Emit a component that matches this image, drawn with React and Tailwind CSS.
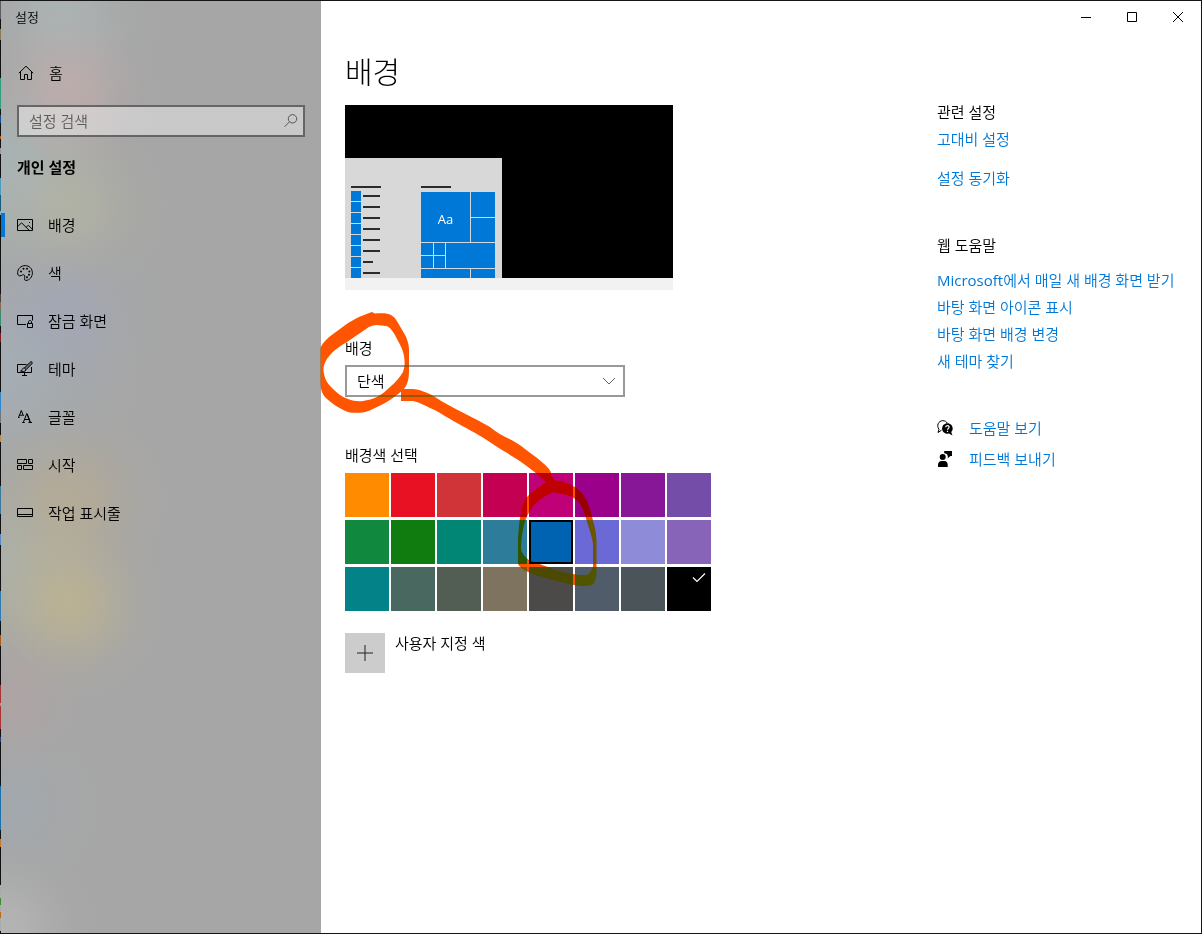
import { useState } from 'react'

const navItems = [
  { label: '배경', icon: PictureIcon, active: true },
  { label: '색', icon: PaletteIcon },
  { label: '잠금 화면', icon: LockScreenIcon },
  { label: '테마', icon: ThemeIcon },
  { label: '글꼴', icon: FontIcon },
  { label: '시작', icon: StartIcon },
  { label: '작업 표시줄', icon: TaskbarIcon },
]

const swatches = [
  '#ff8c00', '#e81123', '#d13438', '#c30052', '#bf0077', '#9a0089', '#881798', '#744da9',
  '#10893e', '#107c10', '#018574', '#2d7d9a', '#0063b1', '#6b69d6', '#8e8cd8', '#8764b8',
  '#038387', '#486860', '#525e54', '#7e735f', '#4c4a48', '#515c6b', '#4a5459', '#000000',
]

const webHelp = ['바탕 화면 아이콘 표시', '바탕 화면 배경 변경', '새 테마 찾기']

// [start, colour] of what shows along the window's left edge
const edgeStops = [
  [0, '#5a5a62'], [18, '#111111'], [28, '#8a7a50'], [39, '#111111'], [77, '#2f9e7c'], [108, '#111111'],
  [114, '#174a8a'], [122, '#111111'], [135, '#b05a10'], [138, '#111111'], [147, '#9a9a9a'], [153, '#111111'],
  [177, '#4a9cc0'], [194, '#1e5a80'], [210, '#7fb0c8'], [214, '#111111'], [293, '#444444'], [301, '#8a6a4a'],
  [309, '#3a8a70'], [325, '#111111'], [332, '#8a1a1a'], [341, '#111111'], [391, '#2f86c8'], [410, '#777777'],
  [422, '#111111'], [434, '#c08a40'], [441, '#111111'], [485, '#3a7a9a'], [513, '#111111'], [533, '#5a8ac8'],
  [544, '#111111'], [590, '#2f7ab0'], [620, '#111111'], [634, '#a85a18'], [645, '#111111'], [684, '#a83434'],
  [702, '#999999'], [705, '#a83434'], [728, '#111111'], [736, '#2a3a8a'], [741, '#111111'], [785, '#1a70a8'],
  [829, '#111111'], [838, '#c07a28'], [846, '#111111'], [884, '#aaaaaa'], [897, '#3a8a30'], [904, '#aaaaaa'],
  [911, '#c06a10'], [917, '#aaaaaa'], [930, '#111111'], [934, '#111111'],
]

const edgeGradient = edgeStops
  .slice(0, -1)
  .map(([y, color], i) => `${color} ${y}px ${edgeStops[i + 1][0]}px`)
  .join(', ')

// [x, y, radius, rgb, strength] of the desktop colours glowing through the acrylic
const glows = [
  [68, 602, 95, '200,185,135', 0.6],
  [68, 500, 100, '196,176,132', 0.45],
  [68, 90, 90, '212,178,176', 0.45],
  [70, 205, 95, '186,186,160', 0.5],
  [66, 310, 100, '158,166,194', 0.4],
  [60, 12, 100, '176,190,190', 0.5],
  [0, 170, 130, '170,188,190', 0.6],
  [0, 370, 140, '164,178,188', 0.6],
  [0, 560, 110, '174,182,170', 0.6],
  [10, 700, 85, '184,160,160', 0.4],
  [10, 805, 90, '156,170,180', 0.5],
  [0, 930, 95, '190,190,190', 0.6],
]

const acrylic = glows
  .map(
    ([x, y, r, rgb, a]) =>
      `radial-gradient(circle at ${x}px ${y}px, rgba(${rgb},${a}) 0, rgba(${rgb},${a * 0.8}) ${r * 0.25}px, rgba(${rgb},${a * 0.4}) ${r * 0.5}px, rgba(${rgb},${a * 0.1}) ${r * 0.78}px, rgba(${rgb},0) ${r}px)`,
  )
  .join(', ')

function Icon({ children, className = '' }) {
  return (
    <svg
      viewBox="0 0 16 16"
      fill="none"
      stroke="currentColor"
      aria-hidden="true"
      className={`size-4 shrink-0 ${className}`}
    >
      {children}
    </svg>
  )
}

function HomeIcon() {
  return (
    <Icon>
      <path d="M.8 8.200 8 1.200l7.200 7M2.500 6.800v7.700h4V9.500h3v5h4V6.800" />
    </Icon>
  )
}

function PictureIcon() {
  return (
    <Icon>
      <path d="M.5 2.500h15v11H.5z" />
      <path d="m.8 9.500 3.700-3.700 7.700 7.500M9.300 10.200l2-2 4 4" />
      <path d="M12 5.500h1" />
    </Icon>
  )
}

function PaletteIcon() {
  return (
    <Icon>
      <path d="M.6 7.800C.6 3.800 4 .6 8.200.6c4 0 7.200 3.100 7.200 7.200 0 4.200-3 7.600-6.400 7.600-1.800 0-1.600-1.600-1.300-2.900.4-2-.6-3.300-2.200-2.600-1.100.5-1.400 1-2.700 1C1.300 10.900.6 9.500.6 7.800z" />
      <g fill="currentColor" stroke="none">
        <circle cx="4" cy="6.500" r="1" />
        <circle cx="6.500" cy="3.700" r="1" />
        <circle cx="10" cy="3.800" r="1" />
        <circle cx="12.400" cy="6.400" r="1" />
        <circle cx="12" cy="9.700" r="1" />
        <circle cx="10" cy="12.300" r="1" />
      </g>
    </Icon>
  )
}

function LockScreenIcon() {
  return (
    <Icon>
      <path d="M9 11.500H.5v-9h15v5M10.500 10.500h5v4h-5zM11.500 10.500V9c0-2 3-2 3 0v1.500" />
    </Icon>
  )
}

function ThemeIcon() {
  return (
    <Icon>
      <path d="M9.500 3.500h-9v8h14V6M7.500 11.500v2.500M5 14.500h5" />
      <path
        d="M14.800.9c-.8-.4-1.400 0-2 .6L7.300 7l1.700 1.700 5.600-5.600c.6-.6.8-1.400.2-2.200z"
        fill="currentColor"
        fillOpacity=".35"
      />
      <path d="M7.300 7c-1.400 0-2 .8-2.100 1.800C5 9.700 4.500 9.900 3.500 10c1.800.8 5.300.8 5.500-1.300" />
    </Icon>
  )
}

function FontIcon() {
  return (
    <Icon>
      <path d="M1.500 8.500 4.300 1.500 6.500 7M2.500 6.200h3.200M1 8.500h1.500" />
      <path d="M6.300 13.500 9.800 4.500l3.400 9M7.500 10.500h4.600M5.300 13.500h2.400M11.500 13.500H15" />
      <path d="m10.300 5 3.200 8.500" />
    </Icon>
  )
}

function StartIcon() {
  return (
    <Icon>
      <path d="M.5 2.500h9v4h-9zM11.500 2.500h4v4h-4zM.5 8.500h4v4h-4zM6.500 8.500h9v4h-9z" />
    </Icon>
  )
}

function TaskbarIcon() {
  return (
    <Icon>
      <path d="M.5 3.500h15v8H.5zM.5 9.500h15" />
    </Icon>
  )
}

function HelpIcon() {
  return (
    <Icon>
      <path d="M4.500 10.200 1 12.500l1-3.300C-.7 6 1.200.7 5.800.7c2 0 3.600.8 4.400 2.300" />
      <path
        d="M10.400 3.300c3 0 5.300 2.300 5.300 5.200 0 1.500-.6 2.700-1.500 3.600l1.300 3.400-3.500-1.900c-3.900.8-6.900-1.800-6.900-5.100 0-2.900 2.300-5.200 5.300-5.200z"
        fill="currentColor"
        stroke="none"
      />
      <path d="M8.800 7.200c.1-2.300 3.500-2 3.300 0-.1 1.200-1.600 1.300-1.600 2.600M10.500 10.800v1.200" stroke="#fff" strokeWidth="1.200" />
    </Icon>
  )
}

function FeedbackIcon() {
  return (
    <Icon>
      <g fill="currentColor" stroke="none">
        <path d="M7.200 0H15v5h-1.600l-2.600 2.300V5.200C10.600 3.500 9.300 2.300 7.200 2.300z" />
        <circle cx="5.700" cy="6" r="3" />
        <path d="M1 16v-2.200C1 11.500 2.700 10 4.500 10h2.800c2 0 3.400 1.500 3.400 3.800V16z" />
      </g>
    </Icon>
  )
}

function WindowControls() {
  return (
    <div className="flex justify-end">
      <button type="button" aria-label="최소화" className="flex h-8 w-[46px] items-center justify-center">
        <svg viewBox="0 0 10 10" className="size-[10px]" stroke="currentColor" fill="none">
          <path d="M0 5.500h10" />
        </svg>
      </button>
      <button type="button" aria-label="최대화" className="flex h-8 w-[46px] items-center justify-center">
        <svg viewBox="0 0 10 10" className="size-[10px]" stroke="currentColor" fill="none">
          <path d="M.5.5h9v9h-9z" />
        </svg>
      </button>
      <button type="button" aria-label="닫기" className="flex h-8 w-[46px] items-center justify-center">
        <svg viewBox="0 0 10 10" className="size-[10px]" stroke="currentColor" fill="none">
          <path d="m0 0 10 10M10 0 0 10" />
        </svg>
      </button>
    </div>
  )
}

function Sidebar() {
  return (
    <aside className="w-80 shrink-0 bg-[#a6a6a6]" style={{ backgroundImage: acrylic }}>
      <div className="flex h-8 items-center pl-[14px] text-[13px]">설정</div>

      <a href="#home" className="mt-5 flex h-10 items-center gap-[15px] pl-[17px]">
        <HomeIcon />
        홈
      </a>

      <div className="mx-4 mt-3 flex h-8 items-center border-2 border-[#666] bg-white/40 pr-1 pl-[10px] text-[#555]">
        <input
          type="text"
          aria-label="설정 검색"
          placeholder="설정 검색"
          className="min-w-0 flex-1 outline-none placeholder:text-[#5c5c5c]"
        />
        <Icon>
          <circle cx="9.500" cy="5.800" r="4.200" />
          <path d="M6.500 8.800 1.500 13.800" />
        </Icon>
      </div>

      <h2 className="mt-5 pl-4 leading-5 font-bold">개인 설정</h2>

      <nav className="mt-6">
        {navItems.map(({ label, icon: ItemIcon, active }) => (
          <a
            key={label}
            href="#"
            aria-current={active ? 'page' : undefined}
            className="flex h-12 items-center"
          >
            <span className={active ? 'h-6 w-1 bg-[#0078d7]' : 'h-6 w-1'} />
            <span className="ml-3 flex items-center gap-[15px]">
              <ItemIcon />
              {label}
            </span>
          </a>
        ))}
      </nav>
    </aside>
  )
}

function Tile({ className }) {
  return <div className={`bg-[#0078d7] ${className}`} />
}

function DesktopPreview() {
  return (
    <div className="flex h-[185px] w-[328px] flex-col bg-black">
      <div className="mt-[53px] flex h-[120px] w-[157px] overflow-hidden bg-[#d8d8d8] pt-7 pl-[6px]">
        <div className="w-[70px]">
          <div className="mb-[3px] h-[2px] w-[30px] bg-[#2b2b2b]" />
          {[17, 17, 17, 17, 17, 17, 10, 17].map((width, i) => (
            <div key={i} className="mb-px flex items-center gap-[2px]">
              <Tile className="size-[10px]" />
              <div className="h-[2px] bg-[#2b2b2b]" style={{ width }} />
            </div>
          ))}
        </div>
        <div className="w-[74px]">
          <div className="mb-1 h-[2px] w-[30px] bg-[#2b2b2b]" />
          <div className="flex flex-col gap-px">
            <div className="flex gap-px">
              <div className="flex h-[50px] w-[49px] items-center justify-center bg-[#0078d7] pt-1 text-[13px] font-normal text-white">
                Aa
              </div>
              <div className="flex flex-1 flex-col gap-px">
                <Tile className="h-[25px]" />
                <Tile className="h-6" />
              </div>
            </div>
            <div className="flex gap-px">
              <div className="grid w-6 grid-cols-2 gap-px">
                <Tile className="h-3" />
                <Tile className="h-3" />
                <Tile className="h-3" />
                <Tile className="h-3" />
              </div>
              <Tile className="flex-1" />
            </div>
            <div className="flex gap-px">
              <Tile className="h-[10px] w-[49px]" />
              <Tile className="h-[10px] flex-1" />
            </div>
          </div>
        </div>
      </div>
      <div className="h-3 bg-[#f2f2f2]" />
    </div>
  )
}

function ColorPicker() {
  const [selected, setSelected] = useState('#000000')

  return (
    <div className="grid w-[366px] grid-cols-8 gap-x-[2px] gap-y-[3px]">
      {swatches.map((color) => (
        <button
          key={color}
          type="button"
          aria-label={color}
          aria-pressed={color === selected}
          onClick={() => setSelected(color)}
          className={`flex h-11 justify-end pt-[3px] pr-1 text-white ${color === '#0063b1' ? 'border-2 border-black' : ''}`}
          style={{ backgroundColor: color }}
        >
          {color === selected && (
            <Icon>
              <path d="m2 7.500 4 4 8-8" strokeWidth="1.200" />
            </Icon>
          )}
        </button>
      ))}
    </div>
  )
}

function RelatedLinks() {
  return (
    <aside className="w-[264px] shrink-0 pt-[69px] leading-5">
      <h2>관련 설정</h2>
      <div className="mt-[7px] flex flex-col items-start gap-[19px] text-[#0078d7]">
        <a href="#">고대비 설정</a>
        <a href="#">설정 동기화</a>
      </div>

      <h2 className="mt-[47px]">웹 도움말</h2>
      <div className="mt-[15px] flex flex-col items-start gap-[7px] text-[#0078d7]">
        <a href="#">
          <span className="font-normal">Microsoft</span>에서 매일 새 배경 화면 받기
        </a>
        {webHelp.map((text) => (
          <a key={text} href="#">{text}</a>
        ))}
      </div>

      <div className="mt-[47px] flex flex-col items-start gap-[11px]">
        <a href="#" className="flex items-center gap-4">
          <HelpIcon />
          <span className="text-[#0078d7]">도움말 보기</span>
        </a>
        <a href="#" className="flex items-center gap-4">
          <FeedbackIcon />
          <span className="text-[#0078d7]">피드백 보내기</span>
        </a>
      </div>
    </aside>
  )
}

// Hand-drawn marker: circles the drop-down and the blue swatch
function MarkerOverlay() {
  return (
    <svg
      viewBox="320 310 280 280"
      fill="#ff5500"
      fillRule="evenodd"
      aria-hidden="true"
      className="pointer-events-none absolute top-[309px] left-[320px] size-[280px] mix-blend-darken"
    >
      <path d="M369 313 372 312 375 313.500C382 313 388 313 391 315 396 318 398 323 401 328 406 336 409 342 409 350V370C409 378 408 385 403 390 395 397 386 403 377 407 371 410 367 412 363 412.500 357 413 352 413 348 412 338 408 331 403 325 397 321 392 320.500 388 320.500 380V348C322 344 324 342 328 338 336 332 347 323 356 318.500 361 316 365 315 369 313ZM377 325C373 325 370 326 366 329 360 333 353 338 347 342 340 346 334 350 330 355 326 360 323.500 364 323.500 370 324 378 327 383 332 388 337 393 342 397 348 399 353 401 358 401.500 363 401 368 400 373 399 377 397 382 394 386 391 390 387 396 382 400 377 403 372 405 366 405 362 404 356 403 349 399 343 396 337 393 331 390 327 386 326 382 325 377 325Z" />
      <path d="M401 389H409C415 389 419 389.500 422 391 432 394 436 398 443 402 459 411 474 418 490 427 501 437 514 439 525 449 536 457 544 463 549 469 552 473 551 476 554 480 562 481 570 484 575 487 580 490 583 494 586 499 590 508 592 515 593 521 595 527 596 533 596.500 540V565C596.500 572 597 577 594 583 592 586 586 586 580 586 568 584 552 580 535 575 527 572 520 568 518 564V538C519 528 519 520 521 514 522 507 523 502 527 497 532 491 539 487 546 482 542 478 535 472 528 467 521 461 510 455 502 450 495 446 489 441 482 437 474 432 464 427 457 423 446 417 438 411 430 408 424 405 418 402 413 401H401ZM554 492C547 495 541 498 536 503 530 509 526 517 524 525 522 533 521 541 521 549 522 554 525 557 529 560 535 562 541 565 548 567 557 571 565 573 573 574 577 575 582 575 586 575 590 574 591 571 593 567V544C592 537 590 531 588 525 586 519 585 514 582 508 580 503 577 500 572 497 567 494 559 494 554 492Z" />
    </svg>
  )
}

export default function App() {
  return (
    <div className="relative flex min-h-screen border-y border-r border-[#141414] bg-white font-['Open_Sans','Noto_Sans_CJK_KR',sans-serif] text-[15px] leading-5 font-[350] text-black">
      <div className="w-px shrink-0" style={{ background: `linear-gradient(${edgeGradient}, #111111 934px)` }} />
      <Sidebar />

      <div className="flex min-w-0 flex-1 flex-col">
        <WindowControls />
        <div className="flex flex-1">
          <main className="min-w-0 flex-1 pt-[19px] pl-6">
            <h1 className="mb-[13px] text-[30px] leading-10 font-light">배경</h1>
            <DesktopPreview />

            <label htmlFor="background-type" className="mt-12 mb-[7px] block">배경</label>
            <div className="grid w-[280px] items-center">
              <select
                id="background-type"
                defaultValue="단색"
                className="col-start-1 row-start-1 h-8 w-full appearance-none border-2 border-[#999] bg-white pr-8 pl-[10px]"
              >
                <option>사진</option>
                <option>단색</option>
                <option>슬라이드 쇼</option>
              </select>
              <svg
                viewBox="0 0 12 12"
                fill="none"
                stroke="#666"
                className="pointer-events-none col-start-1 row-start-1 mr-[10px] size-3 justify-self-end"
              >
                <path d="m0 3 6 6 6-6" />
              </svg>
            </div>

            <h2 className="mt-12 mb-2">배경색 선택</h2>
            <ColorPicker />

            <div className="mt-[22px] flex gap-[10px]">
              <button
                id="custom-color"
                type="button"
                aria-label="사용자 지정 색"
                className="flex size-10 items-center justify-center bg-[#ccc]"
              >
                <Icon>
                  <path d="M8 0v16M0 8h16" stroke="#222" />
                </Icon>
              </button>
              <label htmlFor="custom-color">사용자 지정 색</label>
            </div>
          </main>
          <RelatedLinks />
        </div>
      </div>

      <MarkerOverlay />
    </div>
  )
}
